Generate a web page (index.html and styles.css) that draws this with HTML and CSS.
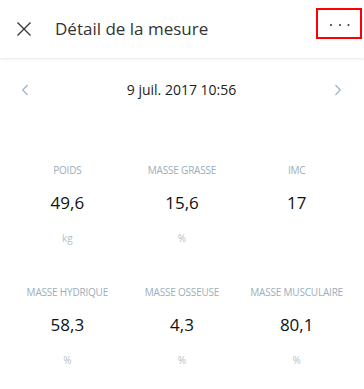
FILE: index.html
```html
<!DOCTYPE html>
<html lang="fr">
<head>
<meta charset="utf-8">
<title>Détail de la mesure</title>
<link rel="stylesheet" href="styles.css">
</head>
<body>
<header class="topbar">
  <button class="close" aria-label="Fermer">
    <svg width="14" height="14" viewBox="0 0 14 14"><path d="M0.5 0.5 L13.5 13.5 M13.5 0.5 L0.5 13.5" stroke="#333" stroke-width="1.3" fill="none"/></svg>
  </button>
  <h1 class="title">Détail de la mesure</h1>
  <button class="menu" aria-label="Plus">
    <svg width="22" height="4" viewBox="0 0 22 4"><circle cx="2" cy="2" r="1.1" fill="#444"/><circle cx="11" cy="2" r="1.1" fill="#444"/><circle cx="19.5" cy="2" r="1.1" fill="#444"/></svg>
  </button>
</header>
<nav class="datenav">
  <svg class="chev" width="8" height="12" viewBox="0 0 8 12"><path d="M6.5 1 L1.8 6 L6.5 11" stroke="#a3b6c6" stroke-width="1.3" fill="none"/></svg>
  <span class="date">9 juil. 2017 10:56</span>
  <svg class="chev" width="8" height="12" viewBox="0 0 8 12"><path d="M1.5 1 L6.2 6 L1.5 11" stroke="#a3b6c6" stroke-width="1.3" fill="none"/></svg>
</nav>
<main class="grid">
  <div class="cell"><span class="label">POIDS</span><span class="value">49,6</span><span class="unit">kg</span></div>
  <div class="cell"><span class="label">MASSE GRASSE</span><span class="value">15,6</span><span class="unit">%</span></div>
  <div class="cell"><span class="label">IMC</span><span class="value">17</span><span class="unit">&nbsp;</span></div>
  <div class="cell"><span class="label">MASSE HYDRIQUE</span><span class="value">58,3</span><span class="unit">%</span></div>
  <div class="cell"><span class="label">MASSE OSSEUSE</span><span class="value">4,3</span><span class="unit">%</span></div>
  <div class="cell"><span class="label">MASSE MUSCULAIRE</span><span class="value">80,1</span><span class="unit">%</span></div>
</main>
</body>
</html>
```
FILE: styles.css
```css
* { box-sizing: border-box; }
html, body { margin: 0; padding: 0; background: #fff; }
body {
  font-family: "Open Sans", "Noto Sans", sans-serif;
  color: #222;
  width: 364px;
  height: 389px;
  overflow: hidden;
}
button { background: none; border: 0; padding: 0; font: inherit; cursor: pointer; }

.topbar {
  height: 58px;
  display: flex;
  align-items: center;
  padding-left: 17px;
  padding-right: 2px;
  box-shadow: 0 1px 3px rgba(0, 0, 0, 0.10);
  position: relative;
}
.close { width: 14px; height: 14px; display: flex; margin-top: 0; }
.close svg { display: block; }
.title {
  margin: 0 0 0 24px;
  font-size: 17px;
  font-weight: 400;
  color: #333;
  line-height: 24px;
}
.menu {
  margin-left: auto;
  align-self: flex-start;
  margin-top: 8px;
  width: 46px;
  height: 31px;
  border: 2px solid #f00;
  display: flex;
  align-items: center;
  justify-content: center;
  padding-top: 3px;
}
.menu svg { display: block; margin-left: 2px; }

.datenav {
  height: 64px;
  display: flex;
  align-items: center;
  justify-content: space-between;
  padding: 0 22px 0 21px;
}
.chev { display: block; }
.date { font-size: 14px; line-height: 20px; color: #222; }

.grid {
  display: grid;
  grid-template-columns: repeat(3, 1fr);
  row-gap: 40px;
  padding: 41px 10px 0;
}
.cell {
  display: flex;
  flex-direction: column;
  align-items: center;
  text-align: center;
}
.label {
  font-size: 10px;
  line-height: 14px;
  color: #9cadbb;
  white-space: nowrap;
  letter-spacing: -0.2px;
}
.value {
  margin-top: 14px;
  font-size: 17px;
  line-height: 24px;
  color: #111;
}
.unit {
  margin-top: 16px;
  font-size: 10px;
  line-height: 14px;
  color: #b3bfc9;
}
```
